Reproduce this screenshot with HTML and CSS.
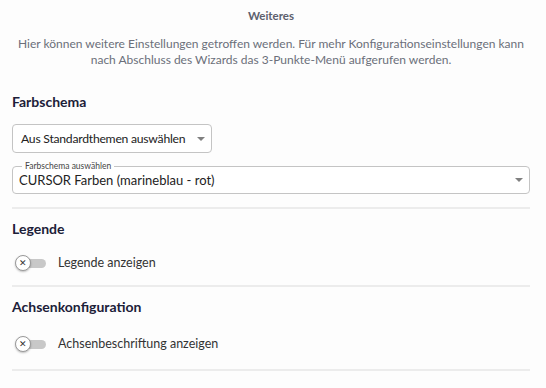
FILE: index.html
```html
<!DOCTYPE html>
<html lang="de">
	<head>
		<title>Weiteres</title>
		<link rel="stylesheet" href="styles.css">
	</head>
	<body class="body">
		<div class="page">
			<h2 class="title">Weiteres</h2>
			<p class="intro">Hier können weitere Einstellungen getroffen werden. Für mehr Konfigurationseinstellungen kann<br>nach Abschluss des Wizards das 3-Punkte-Menü aufgerufen werden.</p>

			<div class="section first">
				<h3 class="heading">Farbschema</h3>
				<div class="select small">
					<span>Aus Standardthemen auswählen</span>
					<span class="arrow"></span>
				</div>
				<fieldset class="select outlined">
					<legend>Farbschema auswählen</legend>
					<span>CURSOR Farben (marineblau - rot)</span>
					<span class="arrow"></span>
				</fieldset>
			</div>

			<div class="section">
				<h3 class="heading">Legende</h3>
				<label class="toggle-row">
					<span class="toggle"><span class="knob">&#x2715;</span></span>
					<span>Legende anzeigen</span>
				</label>
			</div>

			<div class="section last">
				<h3 class="heading">Achsenkonfiguration</h3>
				<label class="toggle-row">
					<span class="toggle"><span class="knob">&#x2715;</span></span>
					<span>Achsenbeschriftung anzeigen</span>
				</label>
			</div>
		</div>
	</body>
</html>
```

FILE: styles.css
```css
.body {
	margin: 0;
	background: #fdfdfd;
	font-family: Lato, "Noto Sans", sans-serif;
	color: #333;
}
.page {
	padding: 0 16px 0 12px;
}
.title {
	margin: 0;
	padding-top: 8px;
	text-align: center;
	font-size: 11.5px;
	font-weight: 700;
	color: #5c606d;
	line-height: 16px;
}
.intro {
	margin: 12px 0 0;
	text-align: center;
	font-size: 12px;
	line-height: 16px;
	color: #6b6f7a;
}
.section {
	border-bottom: 2px solid #ececec;
	padding-bottom: 15px;
}
.first {
	margin-top: 14px;
	padding-bottom: 13px;
}
.last {
	padding-bottom: 18px;
}
.last .toggle-row {
	margin-top: 19px;
}
.heading {
	margin: 0;
	padding-top: 10px;
	font-size: 14px;
	font-weight: 700;
	color: #1c2038;
	line-height: 20px;
}
.select {
	display: flex;
	align-items: center;
	justify-content: space-between;
	box-sizing: border-box;
	border: 1px solid #c4c4c4;
	border-radius: 4px;
	font-size: 13px;
	color: #222;
	background: #fff;
	white-space: nowrap;
}
.small {
	width: 200px;
	height: 29px;
	margin-top: 12px;
	padding: 0 6px 0 8px;
	font-size: 12.2px;
	letter-spacing: -0.25px;
}
.outlined {
	margin: 9px 0 0;
	height: 32px;
	padding: 0 6px 4px 6px;
	min-width: 0;
}
.outlined legend {
	font-size: 8.5px;
	letter-spacing: 0;
	color: #444;
	padding: 0 3px;
	margin-left: 3px;
	line-height: 8px;
}
.arrow {
	width: 0;
	height: 0;
	border-left: 4px solid transparent;
	border-right: 4px solid transparent;
	border-top: 4px solid #808080;
}
.toggle-row {
	display: flex;
	align-items: center;
	gap: 10px;
	margin-top: 16px;
	font-size: 12.5px;
	color: #333;
}
.toggle {
	position: relative;
	width: 30px;
	height: 14px;
	margin-left: 6px;
}
.toggle::before {
	content: "";
	position: absolute;
	left: 6px;
	top: 3px;
	width: 22px;
	height: 9px;
	border-radius: 5px;
	background: #c8c8c8;
}
.knob {
	position: absolute;
	left: -3px;
	top: -1px;
	width: 14px;
	height: 14px;
	border-radius: 50%;
	background: #fff;
	border: 1px solid #999;
	box-shadow: 0 1px 2px rgba(0,0,0,0.25);
	font-size: 9px;
	line-height: 14px;
	text-align: center;
	color: #333;
}
```
